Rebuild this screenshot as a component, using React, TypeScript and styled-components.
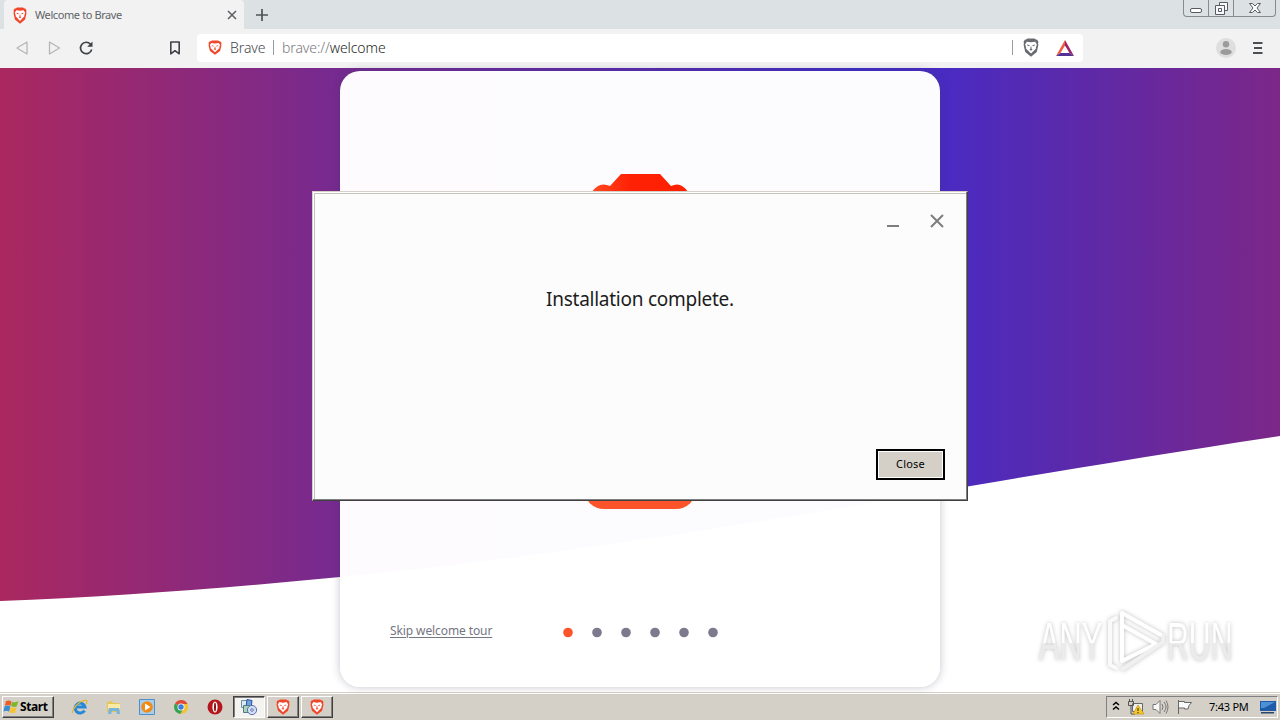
import React from "react";
import styled, { createGlobalStyle, css } from "styled-components";

const Global = createGlobalStyle`
  *, *::before, *::after { box-sizing: border-box; }
  body { margin: 0; overflow: hidden; background: #fff; font-family: "Noto Sans", "Open Sans", sans-serif; }
  svg { display: block; flex: none; }
  button { font-family: inherit; padding: 0; }
`;

const Screen = styled.div`
  position: relative;
  width: 1280px;
  height: 720px;
  overflow: hidden;
  display: flex;
  flex-direction: column;
`;

const TabStrip = styled.header`
  height: 29px;
  flex: none;
  display: flex;
  align-items: flex-start;
  padding-left: 4px;
  background: #dce1e4;
`;

const Tab = styled.div`
  width: 240px;
  height: 29px;
  display: flex;
  align-items: center;
  padding: 1px 7px 0 9px;
  background: #f2f2f2;
  border-radius: 4px 4px 0 0;
`;

const TabTitle = styled.span`
  flex: 1;
  margin-left: 8px;
  font-size: 11px;
  line-height: 16px;
  letter-spacing: -0.4px;
  color: #606367;
  white-space: nowrap;
`;

const NewTab = styled.div`
  padding: 9px 0 0 12px;
`;

const WindowControls = styled.div`
  margin: 0 4px 0 auto;
  display: flex;
  height: 17px;
  border: 1px solid #858b91;
  border-top: 0;
  border-radius: 0 0 4px 4px;
`;

const WindowControl = styled.div<{ $w: number }>`
  width: ${(p) => p.$w}px;
  display: flex;
  justify-content: center;
  & + & { border-left: 1px solid #858b91; }
`;

const Toolbar = styled.nav`
  height: 39px;
  flex: none;
  display: flex;
  align-items: center;
  padding: 0 16px 2px 14px;
  background: #f2f2f2;
`;

const NavIcons = styled.div`
  display: flex;
  width: 183px;
  gap: 16px;
  & > :last-child { margin-left: 57px; }
`;

const AddressBar = styled.div`
  width: 886px;
  height: 28px;
  display: flex;
  align-items: center;
  padding: 0 9px 0 11px;
  background: #fff;
  border-radius: 4px;
  font-size: 14px;
  line-height: 20px;
  font-weight: 300;
  white-space: nowrap;
`;

const SiteName = styled.span`
  width: 37px;
  margin-left: 8px;
  color: #45484c;
  letter-spacing: -0.1px;
`;

const Separator = styled.i<{ $gap: string }>`
  width: 1px;
  height: 15px;
  margin: ${(p) => p.$gap};
  background: #9a9da0;
`;

const Url = styled.span`
  letter-spacing: -0.1px;
  color: #77797c;
  b { font-weight: 300; color: #1d1f22; }
`;

const AdsTriangle = styled.svg`
  margin-left: 17px;
`;

const ToolbarEnd = styled.div`
  margin-left: auto;
  display: flex;
  align-items: center;
  gap: 16px;
`;

const WelcomePage = styled.main`
  position: relative;
  height: 624px;
  flex: none;
  display: flex;
  justify-content: center;
  align-items: flex-start;
  padding-top: 3px;
  background: #fff;
`;

const Wave = styled.svg`
  position: absolute;
  inset: 0;
`;

const Card = styled.section`
  position: relative;
  width: 600px;
  height: 616px;
  display: flex;
  flex-direction: column;
  justify-content: space-between;
  align-items: center;
  border-radius: 20px;
  background: rgba(255, 255, 255, 0.985);
  box-shadow: 0 0 8px rgba(60, 55, 90, 0.3);
`;

const CardArt = styled.div`
  height: 438px;
  padding-top: 103px;
  display: flex;
  flex-direction: column;
  justify-content: space-between;
  align-items: center;
`;

const GetStarted = styled.div`
  width: 112px;
  height: 40px;
  border-radius: 20px;
  background: #fb542b;
`;

const CardFooter = styled.footer`
  width: 100%;
  height: 80px;
  display: flex;
  align-items: flex-start;
  padding: 15px 0 0 50px;
`;

const SkipLink = styled.a`
  width: 172.5px;
  font-size: 12px;
  line-height: 18px;
  letter-spacing: -0.1px;
  color: #747682;
  text-decoration: underline;
  text-underline-offset: 2px;
  white-space: nowrap;
`;

const Dots = styled.svg`
  margin-top: 5px;
`;

const Watermark = styled.div`
  position: absolute;
  left: 1039px;
  top: 607px;
  display: flex;
  align-items: center;
  height: 68px;
  filter: drop-shadow(0 0 2px rgba(0, 0, 0, 0.25));
`;

const WatermarkWord = styled.span<{ $w: number }>`
  width: ${(p) => p.$w}px;
  font-family: "Liberation Sans", sans-serif;
  font-size: 54px;
  line-height: 60px;
  white-space: nowrap;
`;

const Squeeze = styled.span<{ $x: number }>`
  display: inline-block;
  transform: scaleX(${(p) => p.$x});
  transform-origin: 0 50%;
  color: transparent;
  background: linear-gradient(#fff 0 54%, #ebebeb 54% 100%);
  background-clip: text;
`;

const Dialog = styled.section`
  position: absolute;
  left: 312px;
  top: 191px;
  width: 656px;
  height: 310px;
  display: flex;
  flex-direction: column;
  align-items: center;
  background: #fcfcfc;
  border: 1px solid;
  border-color: #d4d0c8 #404040 #404040 #d4d0c8;
  box-shadow: inset -1px -1px #808080, inset 1px 1px #fff, inset 2px 2px #c4c2bd;
`;

const DialogControls = styled.div`
  align-self: flex-end;
  display: flex;
  gap: 31px;
  padding: 22px 23px 0 0;
`;

const DialogMessage = styled.p`
  margin: 56px 0 0;
  font-size: 19px;
  line-height: 30px;
  letter-spacing: -0.26px;
  color: #1c1c1c;
  white-space: nowrap;
`;

const CloseButton = styled.button`
  width: 69px;
  height: 31px;
  margin: auto 22px 20px auto;
  padding-bottom: 2px;
  border: 2px solid #000;
  border-radius: 0;
  background: #d4d0c8;
  box-shadow: inset 1px 1px #fff, inset -1px -1px #fff;
  font-size: 11px;
  letter-spacing: 0.2px;
  color: #000;
`;

const raised = css`
  border: 1px solid;
  border-color: #fff #404040 #404040 #fff;
  box-shadow: inset -1px -1px #808080;
`;

const Taskbar = styled.footer`
  height: 28px;
  flex: none;
  display: flex;
  align-items: center;
  padding: 0 2px;
  border-top: 1px solid #d4d0c8;
  box-shadow: inset 0 1px #fff;
  background: #d4d0c8;
`;

const StartButton = styled.div`
  ${raised}
  width: 52px;
  height: 22px;
  display: flex;
  align-items: center;
  gap: 1px;
  padding-left: 0;
  font: bold 12px/18px "Noto Sans", sans-serif;
  letter-spacing: -0.4px;
  color: #000;
`;

const QuickLaunch = styled.div`
  width: 179px;
  display: flex;
  gap: 17.7px;
  padding-left: 18px;
`;

const TaskButton = styled.div<{ $active?: boolean }>`
  width: 32px;
  height: 22px;
  margin-right: 2px;
  display: flex;
  align-items: center;
  justify-content: center;
  ${(p) =>
    p.$active
      ? css`
          border: 1px solid;
          border-color: #404040 #fff #fff #404040;
          box-shadow: inset 1px 1px #808080;
          background: #f4f3f0;
        `
      : raised}
`;

const Tray = styled.div`
  width: 172px;
  height: 22px;
  margin-left: auto;
  display: flex;
  align-items: center;
  padding: 0 1px 0 5px;
  border: 1px solid;
  border-color: #808080 #fff #fff #808080;
`;

const Clock = styled.time`
  width: 51px;
  margin-left: 16px;
  font-size: 11px;
  line-height: 16px;
  letter-spacing: -0.25px;
  color: #000;
  white-space: nowrap;
`;

const TrayIcons = styled.div`
  display: flex;
  align-items: center;
  gap: 7px;
`;

function Lion({ w, h, color = "#f0462a" }: { w: number; h: number; color?: string }) {
  return (
    <svg width={w} height={h} viewBox="0 0 16 18" preserveAspectRatio="none">
      <path d="M4.500 .5h7l1.400 1 1.300.2 1.300 2-.5 1.300.4 1.500-1.600 6.800L8 17.700l-5.800-4.400L.6 6.500 1 5 .5 3.700l1.300-2 1.300-.2z" fill={color} />
      <path d="M3.800 3.500l4.200.6 4.200-.6 1.700 2.600-1 2.600.1 1.200-2.200 2.100L8 14.800 5.200 12 3 9.900l.1-1.200-1-2.600z" fill="#fff" />
      <path d="M4 6.200l2.700.7-.5.9-1.700-.5zM12 6.200l-2.700.7.5.9 1.700-.5zM7.600 8h.8l.2 2.300.9.700L8 12l-1.500-1 .9-.7z" fill={color} />
    </svg>
  );
}

function BackgroundWave() {
  return (
    <Wave width="1280" height="624" viewBox="0 0 1280 624">
      <defs>
        <linearGradient id="sky" x1="0" x2="1280" y1="0" y2="0" gradientUnits="userSpaceOnUse">
          <stop offset="0" stopColor="#aa285f" />
          <stop offset=".265" stopColor="#762a90" />
          <stop offset=".5" stopColor="#582bb0" />
          <stop offset=".67" stopColor="#3f2dca" />
          <stop offset=".74" stopColor="#4a2bc2" />
          <stop offset=".8" stopColor="#542ab2" />
          <stop offset="1" stopColor="#7c2788" />
        </linearGradient>
      </defs>
      <path d="M0 0H1280V368C1160 386 1060 403 940 423C740 458 540 490 340 509C227 520 110 529 0 533Z" fill="url(#sky)" />
    </Wave>
  );
}

function WatermarkLogo() {
  return (
    <Watermark>
      <WatermarkWord $w={66}><Squeeze $x={0.57}>ANY</Squeeze></WatermarkWord>
      <svg width="62" height="66" viewBox="0 0 62 66" fill="none" strokeLinejoin="round" strokeLinecap="round">
        <path d="M11 10L5 13V57L11 60" stroke="#fafafa" strokeWidth="4" />
        <path d="M17 52V5L58 28M17 17L51 36L17 53" stroke="#fff" strokeWidth="4" />
        <path d="M58 28V34L18 61" stroke="#f0f0f0" strokeWidth="4" />
      </svg>
      <WatermarkWord $w={68}><Squeeze $x={0.56}>RUN</Squeeze></WatermarkWord>
    </Watermark>
  );
}

function StartLogo() {
  return (
    <svg width="16" height="16" viewBox="0 0 17 16">
      <path d="M3 2q3-2 6 0L8 7Q5 5 2 7z" fill="#ee5c28" />
      <path d="M9.500 2.500q3 1 7-1l-2 6q-3 1-6-.5z" fill="#7eb72f" />
      <path d="M1.700 7.500q3-2 6 0l-1.200 5.500q-3-2-6 0z" fill="#398bd2" />
      <path d="M8.200 8q3 1.500 6 .5l-1.400 5.500q-3 1-5.800-.5z" fill="#f8c32d" />
    </svg>
  );
}

function QuickIcons() {
  return (
    <QuickLaunch>
      <svg width="16" height="16" viewBox="0 0 16 16" fill="none">
        <path d="M12.500 11.500A5 5 0 1 1 13 8H4" stroke="#2788d8" strokeWidth="3" />
        <path d="M1 14C-1 11 7 2 13 1.300C16 1 15 4 14 5" stroke="#e4b72e" strokeWidth="1.300" />
      </svg>
      <svg width="16" height="16" viewBox="0 0 16 16">
        <path d="M1 3l5-1 1 2h7v9H1z" fill="#e7c658" />
        <path d="M2 5h12v5H2z" fill="#fbeaa4" />
        <path d="M2 15l1-6h10l1 6h-3l-1-3H6l-1 3z" fill="#75b5dd" />
      </svg>
      <svg width="16" height="16" viewBox="0 0 16 16">
        <path d="M.5.5h15v15H.5z" fill="#a7cfed" stroke="#4a91c9" />
        <circle cx="8" cy="8" r="5.800" fill="#f18a16" />
        <path d="M6 4.500L11.500 8 6 11.500z" fill="#fff" />
      </svg>
      <svg width="16" height="16" viewBox="0 0 16 16">
        <path d="M8 8L2 4.500A7 7 0 0 1 14.500 5H8z" fill="#df4b37" />
        <path d="M8 8L2 4.500A7 7 0 0 0 7.500 15l3-5.500z" fill="#37a252" />
        <path d="M8 5h6.500A7 7 0 0 1 7.500 15l3.200-5.600z" fill="#f3c234" />
        <circle cx="8" cy="8" r="3.500" fill="#fff" />
        <circle cx="8" cy="8" r="2.700" fill="#3b7ddd" />
      </svg>
      <svg width="16" height="16" viewBox="0 0 16 16">
        <circle cx="8" cy="8" r="7.500" fill="#b5161b" />
        <ellipse cx="8" cy="8" rx="2.600" ry="5.500" fill="#fff" />
        <ellipse cx="8" cy="8" rx="1" ry="4.500" fill="#8c1014" />
      </svg>
    </QuickLaunch>
  );
}

function InstallerIcon() {
  return (
    <svg width="18" height="18" viewBox="0 0 18 18">
      <path d="M1.500 2.500h6v7h-6z" fill="#dcebf2" stroke="#6f8fa0" />
      <path d="M7 1.500l5 1-1 8-5-1z" fill="#6fa3dc" stroke="#2b4fa0" />
      <path d="M3.500 7.500h6v7h-6z" fill="#a9d3b5" stroke="#4c7a86" />
      <circle cx="12" cy="12" r="4.600" fill="#d4def4" stroke="#5a6fb4" />
      <circle cx="12" cy="12" r="1.300" fill="#fff" stroke="#5a74a8" />
    </svg>
  );
}

export default function App() {
  return (
    <Screen>
      <Global />
      <TabStrip>
        <Tab>
          <Lion w={14} h={17} />
          <TabTitle>Welcome to Brave</TabTitle>
          <svg width="10" height="10" viewBox="0 0 10 10">
            <path d="M1 1l8 8M9 1l-8 8" stroke="#5f6367" strokeWidth="1.600" />
          </svg>
        </Tab>
        <NewTab>
          <svg width="12" height="12" viewBox="0 0 12 12">
            <path d="M6 0v12M0 6h12" stroke="#505458" strokeWidth="1.700" />
          </svg>
        </NewTab>
        <WindowControls>
          <WindowControl $w={24}>
            <svg width="12" height="16" viewBox="0 0 12 16" fill="#fff" stroke="#555a64">
              <rect x=".5" y="8.500" width="11" height="4" rx="1.500" />
            </svg>
          </WindowControl>
          <WindowControl $w={25}>
            <svg width="13" height="16" viewBox="0 0 13 16" fill="#f6f8fa" stroke="#555a64">
              <path d="M4.500 2.500h8v8h-8z" />
              <path d="M.5 5.500h9v9h-9zM3.500 8.500h3v3h-3z" />
            </svg>
          </WindowControl>
          <WindowControl $w={42}>
            <svg width="12" height="16" viewBox="0 0 12 16" fill="#fff" stroke="#555a64">
              <path d="M.5 3.500h3L6 6l2.500-2.500h3L8 8l3.500 4.500h-3L6 10l-2.500 2.500h-3L4 8z" />
            </svg>
          </WindowControl>
        </WindowControls>
      </TabStrip>

      <Toolbar>
        <NavIcons>
          <svg width="16" height="16" viewBox="0 0 16 16" fill="none" stroke="#b4b6b8" strokeWidth="1.300">
            <path d="M13 2v12L3 8z" strokeLinejoin="round" />
          </svg>
          <svg width="16" height="16" viewBox="0 0 16 16" fill="none" stroke="#b4b6b8" strokeWidth="1.300">
            <path d="M3.500 2v12l10-6z" strokeLinejoin="round" />
          </svg>
          <svg width="16" height="16" viewBox="0 0 16 16" fill="none">
            <path d="M12.500 4.200A5.700 5.700 0 1 0 13.700 9.500" stroke="#3f4246" strokeWidth="1.700" />
            <path d="M14.500 1.500v5.300H9.200z" fill="#3f4246" />
          </svg>
          <svg width="16" height="16" viewBox="0 0 16 16" fill="none">
            <path d="M3.800 2h8.400v11.800L8 10.700l-4.200 3.100z" stroke="#3f4246" strokeWidth="1.600" strokeLinejoin="round" />
          </svg>
        </NavIcons>
        <AddressBar>
          <Lion w={14} h={15} />
          <SiteName>Brave</SiteName>
          <Separator $gap="0 8px 0 6px" />
          <Url>
            brave://<b>welcome</b>
          </Url>
          <Separator $gap="0 10px 0 auto" />
          <Lion w={16} h={19} color="#686b70" />
          <AdsTriangle width="18" height="16" viewBox="0 0 18 16">
            <path d="M9 0L0 16l4.500-3L9 5.500z" fill="#f15a3d" />
            <path d="M9 0l9 16-4.500-3L9 5.500z" fill="#98236c" />
            <path d="M0 16l4.500-3h9l4.500 3z" fill="#533194" />
          </AdsTriangle>
        </AddressBar>
        <ToolbarEnd>
          <svg width="20" height="20" viewBox="0 0 20 20">
            <circle cx="10" cy="10" r="10" fill="#dedede" />
            <circle cx="10" cy="6.300" r="3.200" fill="#9b9b9b" />
            <ellipse cx="10" cy="14" rx="5.800" ry="3" fill="#9b9b9b" />
          </svg>
          <svg width="12" height="14" viewBox="0 0 12 14" stroke="#4c4f52" strokeWidth="1.800">
            <path d="M1 2h9.500M2 7h8M1 12h9.500" />
          </svg>
        </ToolbarEnd>
      </Toolbar>

      <WelcomePage>
        <BackgroundWave />
        <Card>
          <CardArt>
            <svg width="98" height="60" viewBox="0 0 98 60">
              <defs>
                <linearGradient id="mane">
                  <stop offset="0" stopColor="#ff4a22" />
                  <stop offset=".4" stopColor="#ff2104" />
                  <stop offset="1" stopColor="#ff2000" />
                </linearGradient>
              </defs>
              <path d="M1 18Q8 7 19 12L30 0H69L80 12Q90 7 97 18V60H1Z" fill="url(#mane)" />
            </svg>
            <GetStarted />
          </CardArt>
          <CardFooter>
            <SkipLink>Skip welcome tour</SkipLink>
            <Dots width="156" height="12" viewBox="0 0 156 12">
              {[0, 1, 2, 3, 4, 5].map((i) => (
                <circle key={i} cx={5 + i * 29} cy="5.500" r="4.800" fill={i === 0 ? "#fb542b" : "#7c7a8c"} />
              ))}
            </Dots>
          </CardFooter>
        </Card>
      </WelcomePage>

      <WatermarkLogo />

      <Dialog>
        <DialogControls>
          <svg width="12" height="14" viewBox="0 0 12 14">
            <path d="M0 12h12" stroke="#7d7d7d" strokeWidth="2" />
          </svg>
          <svg width="14" height="14" viewBox="0 0 14 14">
            <path d="M1 1l12 12M13 1L1 13" stroke="#7d7d7d" strokeWidth="2" />
          </svg>
        </DialogControls>
        <DialogMessage>Installation complete.</DialogMessage>
        <CloseButton>Close</CloseButton>
      </Dialog>

      <Taskbar>
        <StartButton>
          <StartLogo />
          Start
        </StartButton>
        <QuickIcons />
        <TaskButton $active>
          <InstallerIcon />
        </TaskButton>
        <TaskButton>
          <Lion w={14} h={16} />
        </TaskButton>
        <TaskButton>
          <Lion w={14} h={16} />
        </TaskButton>
        <Tray>
          <TrayIcons>
            <svg width="8" height="12" viewBox="0 0 8 12" fill="none" stroke="#000" strokeWidth="1.500">
              <path d="M1 4l3-2.500L7 4M1 8.500L4 6l3 2.500" />
            </svg>
            <svg width="18" height="16" viewBox="0 0 18 16">
              <path d="M5.500 4.500h10v8h-10z" fill="#eee" stroke="#666" />
              <path d="M1.500 2.500h5v4h-5zM4 6v9h4M2.500 0v3M5.500 0v3" fill="none" stroke="#555" />
              <path d="M11 6l6 9H6z" fill="#f5ca28" stroke="#c79712" strokeWidth=".7" />
              <path d="M11 9v3M11 13v1.200" stroke="#222" />
            </svg>
            <svg width="17" height="16" viewBox="0 0 17 16" fill="none" stroke="#777">
              <path d="M1 5.500h3l4-4v13l-4-4H1z" fill="#f8f8f8" />
              <path d="M10 5q2 3 0 6M12 3q4 5 0 10M14 1.500q4 6.500 0 13" />
            </svg>
            <svg width="17" height="16" viewBox="0 0 17 16" stroke="#666">
              <path d="M2.500 1v14M2.500 2.500h6v1h7l-2.500 3 -1 3.500h-3.500V9H2.500z" fill="#fafafa" />
            </svg>
          </TrayIcons>
          <Clock>7:43 PM</Clock>
          <svg width="16" height="14" viewBox="0 0 16 14">
            <path d="M0 1h16v10H0z" fill="#1f5ba8" />
            <path d="M1 2h14L4 8H1z" fill="#4c91d5" />
            <path d="M1 12h13v1.500H1z" fill="#26466e" />
          </svg>
        </Tray>
      </Taskbar>
    </Screen>
  );
}
